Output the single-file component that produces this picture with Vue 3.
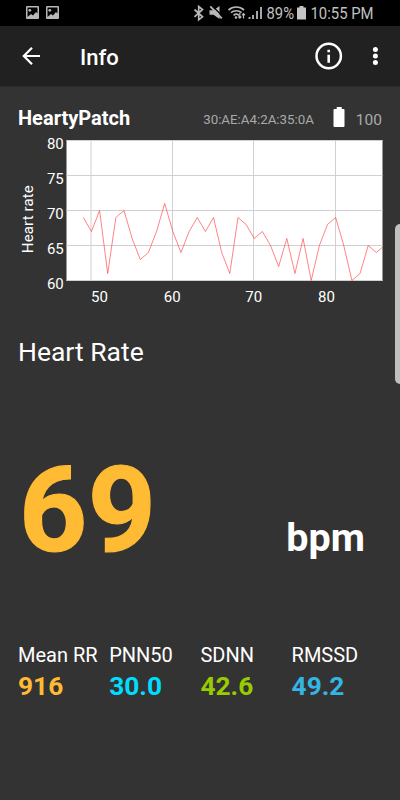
<template>
  <div class="screen">
    <div class="status-bar">
      <svg width="400" height="26" viewBox="0 0 400 26">
        <g v-for="x in [26, 46]" :key="x" :transform="`translate(${x} 6)`">
          <rect x="0" y="0" width="13" height="13" rx="1" fill="#b8b8b8" />
          <path d="M1.500 1.500h10v6l-1.500-1.500-3 3.500-2-1.500-3.500 3z" fill="#000" />
          <circle cx="3.800" cy="4.300" r="1.400" fill="#b8b8b8" />
        </g>
        <path d="M194.500 9.500l8 7.300-3.800 3V6.500l3.800 3-8 7.300" class="line" stroke-width="1.700" />
        <path d="M209.500 10.300h4l6-4.300v13l-6-4.300h-4z" fill="#b8b8b8" />
        <path d="M211.800 5.500l12 12" stroke="#000" stroke-width="1.200" />
        <path d="M210.300 6.300l11.500 12" class="line" stroke-width="1.800" />
        <path d="M228.500 10a11.500 11.500 0 0 1 15.500 0M231 12.700a8 8 0 0 1 10.500 0M233.500 15.300a4.500 4.500 0 0 1 5.500 0" class="line" stroke-width="1.700" />
        <circle cx="236" cy="17.500" r="1.300" fill="#b8b8b8" />
        <path d="M239.800 13v5M238.300 16.500l1.500 1.600 1.500-1.600M243.500 18.500v-5M242 15.200l1.500-1.600 1.500 1.600" class="line" stroke-width="1.200" />
        <path d="M249.500 19v-2M253 19v-4M257 19v-8M261 19V7" class="line" stroke-width="1.800" />
        <text x="266.500" y="18.900" textLength="27.500" lengthAdjust="spacingAndGlyphs">89%</text>
        <path d="M299.500 6h4v1.500h2.500v12h-9v-12h2.500z" fill="#c4c4c4" />
        <text x="310.500" y="18.900" textLength="63" lengthAdjust="spacingAndGlyphs">10:55 PM</text>
      </svg>
    </div>

    <header class="toolbar">
      <svg class="back" width="20" height="20" viewBox="0 0 20 20">
        <path d="M19 10H2.500M11 1.800L2.800 10l8.200 8.200" fill="none" stroke="#fff" stroke-width="2.200" />
      </svg>
      <h1 class="title">Info</h1>
      <svg class="info" width="28" height="28" viewBox="0 0 28 28">
        <circle cx="13.700" cy="14" r="12.200" fill="none" stroke="#fff" stroke-width="2.500" />
        <path d="M12.400 7.700h2.600v2.600h-2.600zM12.400 12.700h2.600v8h-2.600z" fill="#fff" />
      </svg>
      <svg class="more" width="6" height="20" viewBox="0 0 6 20">
        <circle v-for="y in [3.5, 10, 16.5]" :key="y" cx="3.400" :cy="y" r="2.500" fill="#fff" />
      </svg>
    </header>

    <main class="content">
      <div class="device">
        <span class="device-name">HeartyPatch</span>
        <span class="address">30:AE:A4:2A:35:0A</span>
        <svg class="battery" width="12" height="20" viewBox="0 0 12 20">
          <path d="M3.700 0h5v2h1.800q1 0 1 1v16q0 1-1 1h-9q-1 0-1-1V3q0-1 1-1h2.200z" fill="#fff" />
        </svg>
        <span class="level">100</span>
      </div>

      <svg class="chart" width="400" height="180" viewBox="0 130 400 180">
        <clipPath id="plot">
          <rect x="67" y="140" width="315.500" height="141" />
        </clipPath>
        <rect x="66.500" y="140" width="316" height="141" fill="#fff" />
        <g stroke="#d0d0d0" stroke-width="1">
          <path v-for="v in yTicks" :key="v" :d="`M66.500 ${yPos(v)}H382.500`" />
          <path v-for="t in xTicks" :key="t.label" :d="`M${t.line} 140V281`" />
        </g>
        <polyline :points="points" clip-path="url(#plot)" fill="none" stroke="#ff3030" stroke-width="0.600" />
        <text v-for="v in yTicks" :key="v" x="63.800" :y="yPos(v) + 8.2" text-anchor="end">{{ v }}</text>
        <text v-for="t in xTicks" :key="t.label" :x="t.text" y="301.500" text-anchor="middle">{{ t.label }}</text>
        <text transform="translate(33.300 219.200) rotate(-90)" text-anchor="middle" textLength="68">Heart rate</text>
      </svg>

      <h2 class="section-title">Heart Rate</h2>

      <div class="reading">
        <span class="bpm-value">69</span>
        <span class="bpm-unit">bpm</span>
      </div>

      <div class="stats">
        <div v-for="s in stats" :key="s.label" class="stat">
          <div class="stat-label">{{ s.label }}</div>
          <div class="stat-value" :class="s.color">{{ s.value }}</div>
        </div>
      </div>
    </main>

    <div class="edge-handle"></div>
  </div>
</template>

<script setup>
const heartRates = [
  69, 67, 70, 61, 69, 70, 66, 63, 64, 67, 71, 67, 64, 67, 69, 67, 69, 64, 61,
  69, 68, 66, 67, 65, 62, 66, 61, 66, 60, 65, 68, 69, 65, 60, 61, 65, 64, 65
];

const yTicks = [80, 75, 70, 65, 60];
const xTicks = [
  { label: 50, line: 91, text: 99.5 },
  { label: 60, line: 172.5, text: 172.3 },
  { label: 70, line: 253.5, text: 253.7 },
  { label: 80, line: 335.5, text: 326.5 }
];

const yPos = (v) => 140.5 + (80 - v) * 7;

// one sample per second, 8.14px apart
const points = heartRates.map((v, i) => `${(83.3 + i * 8.14).toFixed(2)},${yPos(v)}`).join(' ');

const stats = [
  { label: 'Mean RR', value: '916', color: 'orange' },
  { label: 'PNN50', value: '30.0', color: 'cyan' },
  { label: 'SDNN', value: '42.6', color: 'green' },
  { label: 'RMSSD', value: '49.2', color: 'blue' }
];
</script>

<style>
body {
  margin: 0;
  background: #333;
}
</style>

<style scoped>
.screen {
  position: relative;
  width: 400px;
  height: 800px;
  overflow: hidden;
  background: #333;
  color: #fff;
  font-family: Roboto, sans-serif;
}

svg {
  display: block;
  flex: none;
}

.status-bar {
  height: 26px;
  background: #000;
}

.status-bar text {
  font-size: 17px;
  fill: #c0c0c0;
}

.line {
  fill: none;
  stroke: #b8b8b8;
}

.toolbar {
  display: flex;
  align-items: center;
  box-sizing: border-box;
  height: 61px;
  padding: 0 22px 0 21px;
  background: #212121;
  border-bottom: 1px solid #2b2b2b;
}

.title {
  flex: 1;
  margin: 0 0 0 39px;
  padding-top: 3px;
  font-size: 22px;
  font-weight: 500;
  line-height: 26px;
}

.info {
  margin-right: 29px;
}

.device {
  display: flex;
  align-items: center;
  height: 33px;
  padding: 10px 18px 0;
}

.device-name {
  flex: 1;
  margin-top: 9px;
  font-size: 20px;
  font-weight: 700;
  line-height: 24px;
}

.address {
  margin-top: 13px;
  font-size: 13.3px;
  line-height: 20px;
  color: #aaa;
}

.battery {
  margin: 7px 11px 0 19px;
}

.level {
  margin-top: 12px;
  font-size: 15.5px;
  line-height: 20px;
  color: #aaa;
}

.chart text {
  font-size: 15px;
  fill: #fff;
}

.section-title {
  margin: 26px 18px 0;
  font-size: 26.5px;
  font-weight: 400;
  line-height: 32px;
}

.reading {
  display: flex;
  justify-content: space-between;
  align-items: baseline;
  height: 140px;
  margin: 73px 35px 0 19px;
}

.bpm-value {
  font-size: 119px;
  font-weight: 700;
  line-height: 140px;
  letter-spacing: 0.5px;
  color: #ffbb33;
  -webkit-text-stroke: 1.2px #ffbb33;
}

.bpm-unit {
  font-size: 39.5px;
  font-weight: 700;
  line-height: 46px;
}

.stats {
  display: grid;
  grid-template-columns: repeat(4, 91.2px);
  margin: 61px 0 0 18px;
}

.stat-label {
  font-size: 20px;
  line-height: 26px;
  white-space: nowrap;
}

.stat-value {
  font-size: 26.3px;
  font-weight: 700;
  line-height: 36px;
}

.orange {
  color: #ffbb33;
}

.cyan {
  color: #00ddff;
}

.green {
  color: #99cc00;
}

.blue {
  color: #33b5e5;
}

.edge-handle {
  position: absolute;
  top: 224px;
  right: 0;
  width: 5px;
  height: 160px;
  border-radius: 5px 0 0 5px;
  background: #c0c0c0;
}
</style>
